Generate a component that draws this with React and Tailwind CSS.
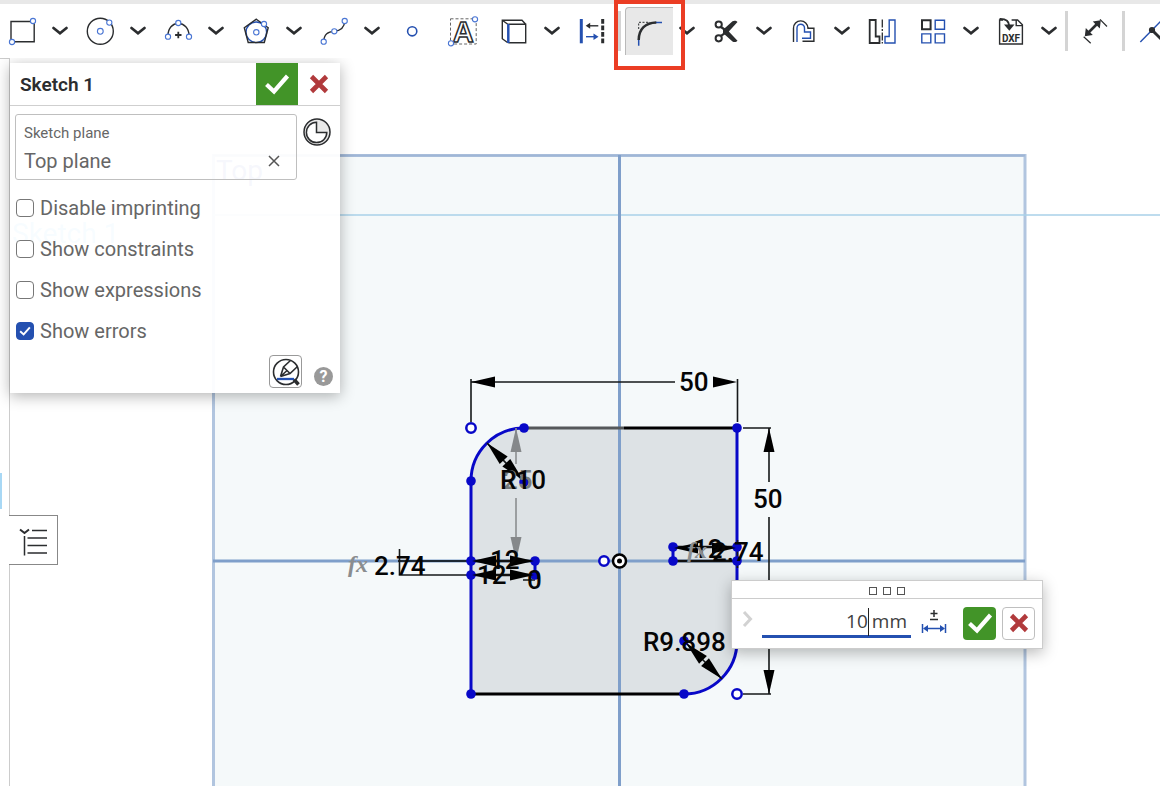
import React, { useState } from "react";

const INK = "#2b2d2f";
const BLUE = "#2450b0";
const NODE = "#4a76d4";

function Icon({ children, size = 30 }) {
  return (
    <svg className="overflow-visible" width={size} height={size} viewBox="0 0 30 30" fill="none" stroke={INK} strokeWidth="1.4" aria-hidden="true">
      {children}
    </svg>
  );
}

function Dot({ x, y, r = 2.6 }) {
  return <circle cx={x} cy={y} r={r} fill="#fff" stroke={NODE} strokeWidth="1.1" />;
}

const icons = {
  rectangle: (
    <Icon>
      <path d="M4 5.5h23.2v20.2H4z" />
      <Dot x={26} y={5} />
      <Dot x={5} y={26} />
    </Icon>
  ),
  circle: (
    <Icon>
      <circle cx="15.3" cy="15.3" r="13" />
      <Dot x={24.3} y={6.6} />
      <Dot x={15.3} y={15.3} r={2.9} />
    </Icon>
  ),
  arc: (
    <Icon>
      <path d="M5 19.5C5 12 9.5 7.5 15.3 7.5S26 12 26 19.5" />
      <path d="M15.3 15.8v6.4M12.1 19h6.4" strokeWidth="1.8" />
      <Dot x={5} y={20.7} />
      <Dot x={26} y={20.7} />
      <Dot x={15.3} y={7} />
    </Icon>
  ),
  polygon: (
    <Icon>
      <circle cx="15.3" cy="16.3" r="10.3" stroke={BLUE} />
      <path d="M15.3 3.2 27.2 11.7 23.3 26.5H7.2L3.3 11.7z" />
      <Dot x={23} y={8} />
      <Dot x={15.3} y={16.3} r={2.7} />
    </Icon>
  ),
  spline: (
    <Icon>
      <path d="M4.7 25.7C5 17.5 9 16 15.3 15.3S25.500 12 25.7 5" />
      <Dot x={4.7} y={25.7} />
      <Dot x={15.3} y={15.3} />
      <Dot x={25.7} y={5} />
    </Icon>
  ),
  point: (
    <Icon>
      <circle cx="15.2" cy="15.3" r="4.6" stroke={BLUE} strokeWidth="1.6" />
    </Icon>
  ),
  text: (
    <Icon>
      <path d="M2.5 2.8h25.7v25.2H2.5z" strokeDasharray="3 2" strokeWidth="1" stroke="#666" />
      <text x="15.3" y="25.5" textAnchor="middle" fontFamily="'Liberation Sans', sans-serif" fontSize="29" fontWeight="700" fill="#fff" strokeWidth="1.5">A</text>
      <Dot x={27} y={3.3} />
      <Dot x={3} y={27.3} />
    </Icon>
  ),
  use: (
    <Icon>
      <path d="M9.3 8.3h17.4v18.4H9.3M26.7 8.3 23 4.2H3.3v18.5l5.5 4M3.3 4.2l5.5 4" />
      <path d="M9.3 8v19" stroke={BLUE} strokeWidth="2.5" />
    </Icon>
  ),
  construction: (
    <Icon>
      <path d="M4.3 3v24.3" stroke={BLUE} strokeWidth="3" />
      <path d="M25.7 3v24.3" strokeWidth="3" strokeDasharray="4.800 1.700" />
      <path d="M21.3 9.8H11" />
      <path d="m8.7 9.8 4.5-3v6z" fill={INK} stroke="none" />
      <path d="M9 20.7h9.5" stroke={BLUE} />
      <path d="m21.5 20.7-5-3.2v6.4z" fill={BLUE} stroke="none" />
    </Icon>
  ),
  fillet: (
    <Icon>
      <path d="M3.7 12V5.3h11" strokeWidth="1" strokeDasharray="2 1.5" />
      <path d="M3.7 28.7v-6.5M20.5 5.500h6.500" stroke={BLUE} strokeWidth="1.5" />
      <path d="M3.7 23C3.8 12 10.5 5.7 21.3 5.5" strokeWidth="2.5" />
    </Icon>
  ),
  trim: (
    <Icon>
      <circle cx="7.7" cy="8.5" r="3.1" strokeWidth="2" />
      <circle cx="7.7" cy="22.3" r="3.1" strokeWidth="2" />
      <path d="m10 11 5 3.500M10 19.800l5-3.500" strokeWidth="2.200" />
      <path d="M12 13.800 21.500 5.300c1.800-1 4-.5 5 .7L17.800 15.400l8.700 9.400c-1 1.200-3.200 1.700-5 .7L12 17z" fill={INK} stroke="none" />
    </Icon>
  ),
  offset: (
    <Icon>
      <path d="M4.500 26V12.200a7.200 7.200 0 0 1 14.400-.2h.3v.2h5.700V25.300H13.500" />
      <path d="M8 26V12a3.700 3.700 0 0 1 7.500 0v4h6v6.300h-8.500" stroke={BLUE} />
    </Icon>
  ),
  mirror: (
    <Icon>
      <path d="M2.700 4h6v16.500h3.800V27H2.700z" strokeWidth="1.8" />
      <path d="M15.300 3.500v24" strokeDasharray="8 1.500 2 1.500" strokeWidth="1.3" />
      <path d="M28 4h-5.800v16.500H18V27h10z" stroke={BLUE} />
    </Icon>
  ),
  pattern: (
    <Icon>
      <path d="M4 4.300h8.600v9H4z" strokeWidth="2" />
      <path d="M17.200 4.300h9.300v9h-9.300zM3.800 17.900h9v9h-9zM17.200 17.900h9.300v9h-9.300z" stroke={BLUE} />
    </Icon>
  ),
  dxf: (
    <Icon>
      <path d="M7 4H3.600v24h22.800V8.800L21.600 4h-6M20.200 4v5.600h6" />
      <path d="M3.600 3C10 2.800 13 4.500 13.200 10" strokeWidth="2" />
      <path d="M8 8.500h10.500l-5.200 6.200z" fill={INK} stroke="none" />
      <text x="15" y="25.600" textAnchor="middle" fontFamily="Roboto, sans-serif" fontSize="10" fontWeight="700" fill={INK} stroke="none">DXF</text>
    </Icon>
  ),
  dimension: (
    <Icon>
      <path d="m8 17 10-10" strokeWidth="2.600" />
      <path d="m4.800 20.300 1-8.200 7 7zM20.800 4.300l-1 8.200-7-7z" fill={INK} stroke="none" />
      <path d="m3.700 20.700 7 6.500M20 3.300l7 7.200" strokeWidth="1.200" />
    </Icon>
  ),
  coincident: (
    <Icon>
      <path d="M2.300 26 28 0" stroke={BLUE} />
      <path d="m14 14 12 12" strokeWidth="3" />
      <circle cx="14" cy="14" r="3.1" fill={INK} stroke="none" />
    </Icon>
  ),
};

function Chevron({ label, narrow }) {
  return (
    <button aria-label={label} className={narrow ? "flex h-10 w-7 items-center justify-center" : "flex h-10 w-9 items-center justify-center"}>
      <svg width="16" height="10" viewBox="0 0 16 10" fill="none" stroke={INK} strokeWidth="2.7" aria-hidden="true">
        <path d="m1.500 2 6.500 5.300L14.500 2" strokeLinecap="round" />
      </svg>
    </button>
  );
}

function Tool({ name, menu }) {
  return (
    <div className={menu ? "mr-0.5 flex shrink-0" : "mr-[11px] flex shrink-0"}>
      <button aria-label={name} className="flex h-10 w-10 items-center justify-center">
        {icons[name]}
      </button>
      {menu && <Chevron label={name + " options"} />}
    </div>
  );
}

function Separator() {
  return <div className="h-10 w-[3px] shrink-0 bg-[#d4d4d4]" />;
}

function Toolbar() {
  return (
    <header className="relative z-20 flex h-[58px] items-center overflow-x-clip border-t-4 border-[#e8e8e8] bg-white pl-0.5">
      <Tool name="rectangle" menu />
      <Tool name="circle" menu />
      <Tool name="arc" menu />
      <Tool name="polygon" menu />
      <Tool name="spline" menu />
      <Tool name="point" />
      <Tool name="text" />
      <Tool name="use" menu />
      <button aria-label="construction" className="mr-1.5 flex h-10 w-10 shrink-0 items-center justify-center">
        {icons.construction}
      </button>
      <div className="relative mr-[5px] flex shrink-0 items-center">
        <Separator />
        <button aria-label="fillet" className="ml-1 flex h-12 w-12 items-center justify-center rounded-tl border-t border-l border-[#b9b9b9] bg-[#e8e8e8]">
          {icons.fillet}
        </button>
        <Chevron label="fillet options" narrow />
        <div className="pointer-events-none absolute -top-[7px] -left-1 h-[70px] w-[71px] border-4 border-[#eb3d24]" />
      </div>
      <Tool name="trim" menu />
      <Tool name="offset" menu />
      <Tool name="mirror" />
      <Tool name="pattern" menu />
      <Tool name="dxf" menu />
      <div className="-ml-1 flex shrink-0 items-center">
        <Separator />
        <button aria-label="dimension" className="mx-[7px] flex h-10 w-10 items-center justify-center">
          {icons.dimension}
        </button>
        <Separator />
        <button aria-label="coincident" className="ml-2 flex h-10 w-10 items-center justify-center">
          {icons.coincident}
        </button>
      </div>
    </header>
  );
}

// Arrow head with its tip at x,y; angle 0 points to the right
function Arrow({ x, y, angle = 0, color = "#000", length = 24 }) {
  return <path d={`M0 0L${-length} -5.500V5.500z`} fill={color} transform={`translate(${x} ${y}) rotate(${angle})`} />;
}

const solid = [[524, 428], [737, 428], [471, 481], [471, 694], [684, 694], [524, 482], [684, 641], [471, 561], [471, 575], [535, 561], [535, 575], [673, 547], [673, 561], [737, 547], [737, 561]];
const hollow = [[471, 428], [737, 694], [604, 561]];

function SketchCanvas() {
  return (
    <svg className="absolute inset-0 h-full w-full" aria-label="Sketch canvas">
      <g transform="translate(-10 -58)" fontFamily="Roboto, sans-serif" fontSize="26" fontWeight="500" fill="#050505">
        <path d="M213.500 155.500H1025V968H213.500z" fill="#f5f9fa" stroke="#b1c5df" strokeWidth="3" />
        <path d="M213 155.500h812" stroke="#9fb6d6" strokeWidth="2" />
        <path d="M213 215h2000" stroke="#a9d0e8" strokeWidth="1.5" />
        <text x="216" y="180" fontSize="28" fontWeight="400" fill="#4a5fc4">Top</text>
        <text x="12" y="243" fontSize="28" fontWeight="400" fill="#5fc0ee">Sketch 1</text>

        <path d="M524 428H737V641A53 53 0 0 1 684 694H471V481A53 53 0 0 1 524 428z" fill="#dde2e5" />
        <path d="M213 561h812M619.500 155v813" stroke="#7f9fca" strokeWidth="3" />

        <g fill="none" strokeWidth="3">
          <path d="M524 428h100" stroke="#55585a" />
          <path d="M624 428h113M471 694h213" stroke="#000" />
          <path d="M471 694V481A53 53 0 0 1 524 428M737 428V641A53 53 0 0 1 684 694M535 561v14M673 547v14" stroke="#0808c8" />
          <path d="M398 561h73" stroke="#1d2834" strokeWidth="2" />
          <path d="M471 561h64M471 575h64M673 547h64M673 561h64" stroke="#111" strokeWidth="2.5" />
        </g>

        <g fill="none" stroke="#16191a" strokeWidth="1.6">
          <path d="M471 422v-43M737.500 422v-43M471 382h204M743 428h28M743 694h28M769 428v54M769 517v177" />
          <path d="M399.500 549v26h72M523 580h12M737.500 540v28" />
          <path d="m487 443 37 39M684 641l38 38" />
        </g>
        <path d="M516 428v36M516 498v63" stroke="#8b8e90" strokeWidth="1.6" />

        <Arrow x={471} y={382} angle={180} />
        <Arrow x={737} y={382} />
        <Arrow x={769} y={428} angle={-90} />
        <Arrow x={769} y={694} angle={90} />
        <Arrow x={516} y={428} angle={-90} color="#85888a" />
        <Arrow x={516} y={561} angle={90} color="#85888a" />

        {solid.map(([x, y]) => (
          <circle key={x + "-" + y} cx={x} cy={y} r="4.8" fill="#0808c8" />
        ))}
        {hollow.map(([x, y]) => (
          <circle key={x + "-" + y} cx={x} cy={y} r="4.7" fill="#fff" stroke="#0808c8" strokeWidth="2.5" />
        ))}
        <circle cx="619.5" cy="561" r="6.5" fill="#fff" stroke="#000" strokeWidth="2.5" />
        <circle cx="619.5" cy="561" r="2.5" fill="#000" />

        <Arrow x={487} y={443} angle={226} />
        <Arrow x={523} y={480} angle={46} />
        <Arrow x={686} y={643} angle={225} />
        <Arrow x={722} y={679} angle={45} />
        <Arrow x={472} y={561} angle={180} />
        <Arrow x={534} y={561} />
        <Arrow x={472} y={575} angle={180} />
        <Arrow x={534} y={575} />
        <Arrow x={674} y={548} angle={180} />
        <Arrow x={736} y={548} />

        <text x="679" y="391">50</text>
        <text x="753" y="508">50</text>
        <text x="503" y="489" fill="#777b7d">25</text>
        <text x="500" y="489">R10</text>
        <text x="643" y="651">R9.898</text>
        <text x="374" y="575">2.74</text>
        <text x="490" y="569">12</text>
        <text x="477" y="584">12</text>
        <text x="527" y="589">0</text>
        <text x="693" y="558">12</text>
        <text x="712" y="561">2.74</text>
        <g fontFamily="'Liberation Serif', serif" fontStyle="italic" fontWeight="700" fontSize="24" fill="#8a8d8f">
          <text x="348" y="572">fx</text>
          <text x="687" y="558">fx</text>
        </g>
      </g>
    </svg>
  );
}

function Check({ size }) {
  return (
    <svg width={size} height={size} viewBox="0 0 26 26" fill="none" stroke="#fff" strokeWidth="4.2" aria-hidden="true">
      <path d="m2.500 13.500 7.500 7L23.500 5" />
    </svg>
  );
}

function Cross() {
  return (
    <svg width="20" height="20" viewBox="0 0 20 20" stroke="#b13a3c" strokeWidth="4.6" aria-hidden="true">
      <path d="m2.500 2.500 15 15M17.500 2.500l-15 15" />
    </svg>
  );
}

function Option({ label, checked, onChange }) {
  return (
    <label className="flex h-[41px] items-center gap-1.5 text-[20px] text-[#666666]">
      <span className="relative flex">
        <input
          type="checkbox"
          checked={checked}
          onChange={onChange}
          className="h-[18px] w-[18px] appearance-none rounded border border-[#777777] bg-white checked:border-[#2450b0] checked:bg-[#2450b0]"
        />
        {checked && (
          <span className="pointer-events-none absolute inset-0 flex items-center justify-center">
            <Check size={12} />
          </span>
        )}
      </span>
      {label}
    </label>
  );
}

function SketchPanel() {
  const [options, setOptions] = useState({
    "Disable imprinting": false,
    "Show constraints": false,
    "Show expressions": false,
    "Show errors": true,
  });

  return (
    <section className="absolute top-[5px] left-0 w-[330px] bg-white/95 shadow-[0_3px_14px_rgba(0,0,0,0.3)]">
      <div className="flex h-[43px] items-stretch border-b border-[#cfcfcf] pl-2.5">
        <h1 className="flex-1 self-center pt-0.5 text-[19px] font-semibold text-[#2b2d2f]">Sketch 1</h1>
        <button aria-label="Accept" className="flex w-[42px] items-center justify-center bg-[#429428]">
          <Check size={26} />
        </button>
        <button aria-label="Cancel" className="flex w-[42px] items-center justify-center">
          <Cross />
        </button>
      </div>

      <div className="flex items-start gap-1.5 pt-2 pl-[5px]">
        <div className="flex h-[66px] w-[282px] flex-col justify-center rounded-[3px] border border-[#bfbfbf] px-2 pt-[3px] text-[#666666]">
          <span className="text-[15px] leading-6">Sketch plane</span>
          <div className="flex items-center justify-between pr-2 text-[20px] leading-8">
            <span>Top plane</span>
            <button aria-label="Clear plane">
              <svg width="12" height="12" viewBox="0 0 12 12" stroke="#555" strokeWidth="1.5" aria-hidden="true">
                <path d="m1 1 10 10M11 1 1 11" />
              </svg>
            </button>
          </div>
        </div>
        <button aria-label="Final" className="mt-1">
          <svg width="28" height="28" viewBox="0 0 28 28" fill="none" stroke={INK} strokeWidth="1.5" aria-hidden="true">
            <circle cx="14" cy="14" r="13" fill="#e9e9e9" />
            <path d="M13.500 4.200V14.500H23.800A10.200 10.200 0 1 1 13.500 4.200z" fill="#fff" />
          </svg>
        </button>
      </div>

      <div className="mt-[7px] flex flex-col pl-1.5">
        {Object.keys(options).map((label) => (
          <Option
            key={label}
            label={label}
            checked={options[label]}
            onChange={() => setOptions((prev) => ({ ...prev, [label]: !prev[label] }))}
          />
        ))}
      </div>

      <div className="flex items-end justify-end gap-3 pt-1 pr-[7px] pb-[5px]">
        <button aria-label="View sketch" className="flex h-[33px] w-[33px] items-center justify-center rounded border border-[#999999] bg-white">
          <svg width="28" height="28" viewBox="0 0 28 28" fill="none" stroke={INK} strokeWidth="1.6" aria-hidden="true">
            <circle cx="14" cy="14" r="12.5" />
            <path d="M5 21h17" stroke={BLUE} strokeWidth="2.3" />
            <path d="M8.500 18.500 11.500 9 18.500 2.500M8.500 18.500 18 15.500 25.500 8.500M11.500 9l6.500 6.500M8.500 18.500l6-5.500" />
            <path d="m22 21.500 4.500 5" strokeWidth="3.5" />
          </svg>
        </button>
        <button aria-label="Help" className="mb-0.5 flex h-[19px] w-[19px] items-center justify-center rounded-full bg-[#999999] text-[16px] leading-none font-bold text-white">
          ?
        </button>
      </div>
    </section>
  );
}

function ValueDialog() {
  const [value, setValue] = useState("10");

  return (
    <form
      onSubmit={(e) => e.preventDefault()}
      className="absolute top-[522px] left-[721px] w-[312px] border border-[#cccccc] bg-white shadow-[0_4px_14px_rgba(0,0,0,0.28)]"
    >
      <div className="flex h-[18px] items-center justify-center gap-1.5 border-b border-[#cccccc] pt-0.5">
        <i className="h-2 w-2 border border-[#555555]" />
        <i className="h-2 w-2 border border-[#555555]" />
        <i className="h-2 w-2 border border-[#555555]" />
      </div>
      <div className="flex h-[49px] items-center pr-[7px] pb-px pl-2.5">
        <button type="button" aria-label="Expand" className="mb-2 w-5">
          <svg width="11" height="18" viewBox="0 0 11 18" fill="none" stroke="#d2d2d2" strokeWidth="3" aria-hidden="true">
            <path d="m2 2 6.500 7L2 16" />
          </svg>
        </button>
        <label className="flex h-[30px] flex-1 items-center border-b-[3px] border-[#2450b0] pr-1 font-['Open_Sans',sans-serif] text-[19px] text-[#404040]">
          <input
            aria-label="Radius"
            value={value}
            onChange={(e) => setValue(e.target.value)}
            className="w-full min-w-0 flex-1 bg-transparent text-right outline-none"
          />
          <span className="mr-[3px] h-7 w-px shrink-0 bg-[#222222]" />
          mm
        </label>
        <button type="button" aria-label="Tolerance" className="mx-2.5">
          <svg width="26" height="26" viewBox="0 0 26 26" fill="none" stroke={INK} strokeWidth="1.5" aria-hidden="true">
            <path d="M13 0v7M9.500 3.500h7M9 9.500h8" />
            <path d="M1.500 14v9M24.500 14v9M4 18.500h18" stroke={BLUE} />
            <path d="m2 18.500 5-3.500v7zM24 18.500l-5-3.500v7z" fill={BLUE} stroke="none" />
          </svg>
        </button>
        <button aria-label="Accept value" className="ml-1.5 flex h-[33px] w-[33px] items-center justify-center rounded bg-[#429428]">
          <Check size={26} />
        </button>
        <button type="button" aria-label="Cancel value" className="ml-1.5 flex h-[33px] w-[33px] items-center justify-center rounded border border-[#bfbfbf] bg-white">
          <Cross />
        </button>
      </div>
    </form>
  );
}

export default function App() {
  return (
    <div className="flex min-h-screen flex-col overflow-hidden bg-white font-[Roboto,sans-serif]">
      <Toolbar />
      <div className="flex flex-1">
        <aside className="w-2.5 shrink-0 border-t border-r border-[#cccccc] pt-[414px]">
          <div className="h-9 w-0.5 bg-[#a8d8f5]" />
        </aside>
        <main className="relative flex-1">
          <SketchCanvas />
          <SketchPanel />
          <button aria-label="Feature list" className="absolute top-[457px] -left-px flex h-[50px] w-[49px] items-center justify-center border border-l-0 border-[#888888] bg-white pt-1">
            <svg width="28" height="28" viewBox="0 0 28 28" fill="none" stroke={INK} strokeWidth="1.5" aria-hidden="true">
              <path d="M13 2.500h15M8.500 10H28M8.500 17.500H28M8.500 25H28M5.500 8v19.500" />
              <path d="m1 1.500 4.500 3.500L10 1.500" strokeWidth="2" />
            </svg>
          </button>
          <ValueDialog />
        </main>
      </div>
    </div>
  );
}
